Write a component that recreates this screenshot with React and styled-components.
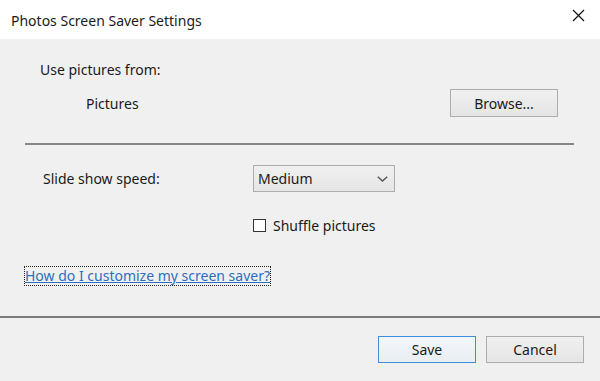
import React from 'react';
import styled, { createGlobalStyle } from 'styled-components';

const GlobalStyle = createGlobalStyle`
  html, body {
    margin: 0;
    padding: 0;
    background: #f0f0f0;
  }
  body {
    font-family: "Noto Sans", "Open Sans", sans-serif;
    font-size: 14px;
    color: #1a1a1a;
  }
`;

function CloseIcon() {
  return (
    <svg width="13" height="13" viewBox="0 0 13 13">
      <path d="M1 1 L12 12 M12 1 L1 12" stroke="#111" strokeWidth="1.2" fill="none" />
    </svg>
  );
}

function Chevron() {
  return (
    <svg width="11" height="6" viewBox="0 0 11 6">
      <path d="M0.8 0.8 L5.5 5 L10.2 0.8" stroke="#555" strokeWidth="1.4" fill="none" />
    </svg>
  );
}

function App() {
  return (
    <>
      <GlobalStyle />
      <Dialog>
        <TitleBar>
          <Title>Photos Screen Saver Settings</Title>
          <CloseButton>
            <CloseIcon />
          </CloseButton>
        </TitleBar>
        <Body>
          <SourceLabel>Use pictures from:</SourceLabel>
          <SourceRow>
            <FolderName>Pictures</FolderName>
            <Button $w={108} $h={28}>Browse...</Button>
          </SourceRow>
          <Divider />
          <SpeedRow>
            <SpeedLabel>Slide show speed:</SpeedLabel>
            <Select>
              <span>Medium</span>
              <Chevron />
            </Select>
          </SpeedRow>
          <CheckRow>
            <CheckBox />
            <span>Shuffle pictures</span>
          </CheckRow>
          <HelpLink href="#">How do I customize my screen saver?</HelpLink>
        </Body>
        <Footer>
          <Button $w={98} $h={27} $primary>Save</Button>
          <Button $w={98} $h={27}>Cancel</Button>
        </Footer>
      </Dialog>
    </>
  );
}

export default App;

const Dialog = styled.div`
  width: 600px;
  height: 381px;
  display: flex;
  flex-direction: column;
  background: #f0f0f0;
`;

const TitleBar = styled.div`
  height: 39px;
  background: #ffffff;
  display: flex;
  align-items: center;
  justify-content: space-between;
  padding: 0 15px 0 11px;
`;

const Title = styled.div`
  font-size: 14px;
  color: #1b1b1b;
  margin-top: 2px;
`;

const CloseButton = styled.div`
  display: flex;
  margin-bottom: 9px;
`;

const Body = styled.div`
  display: flex;
  flex-direction: column;
  align-items: flex-start;
  border-bottom: 2px solid #7c7c7c;
  height: 279px;
  box-sizing: border-box;
`;

const SourceLabel = styled.div`
  margin: 21px 0 0 40px;
  line-height: 20px;
`;

const SourceRow = styled.div`
  align-self: stretch;
  display: flex;
  align-items: center;
  justify-content: space-between;
  margin: 9px 42px 0 86px;
`;

const FolderName = styled.div`
  line-height: 20px;
  margin-top: 2px;
`;

const Divider = styled.div`
  align-self: stretch;
  height: 2px;
  background: #878787;
  margin: 26px 26px 0 25px;
`;

const SpeedRow = styled.div`
  display: flex;
  align-items: center;
  margin: 20px 0 0 43px;
`;

const SpeedLabel = styled.div`
  width: 210px;
`;

const Select = styled.div`
  width: 142px;
  height: 27px;
  box-sizing: border-box;
  border: 1px solid #acacac;
  background: linear-gradient(#f0f0f0, #e5e5e5);
  display: flex;
  align-items: center;
  justify-content: space-between;
  padding: 0 6px 0 4px;
`;

const CheckRow = styled.div`
  display: flex;
  align-items: center;
  gap: 7px;
  margin: 24px 0 0 253px;
`;

const CheckBox = styled.div`
  width: 13px;
  height: 13px;
  box-sizing: border-box;
  border: 1px solid #333;
  background: #fff;
`;

const HelpLink = styled.a`
  margin: 32px 0 0 25px;
  color: #2a6fc0;
  text-decoration: underline;
  outline: 1px dotted #222;
  line-height: 18px;
`;

const Footer = styled.div`
  display: flex;
  justify-content: flex-end;
  gap: 10px;
  padding: 18px 16px 0 0;
  height: 63px;
  box-sizing: border-box;
`;

const Button = styled.div`
  width: ${(p) => p.$w}px;
  height: ${(p) => p.$h}px;
  box-sizing: border-box;
  display: flex;
  align-items: center;
  justify-content: center;
  border: 1px solid ${(p) => (p.$primary ? '#3c8fdc' : '#adadad')};
  background: ${(p) =>
    p.$primary ? 'linear-gradient(#f3f6f9, #e9eef3)' : 'linear-gradient(#f0f0f0, #e5e5e5)'};
  color: #1a1a1a;
`;
